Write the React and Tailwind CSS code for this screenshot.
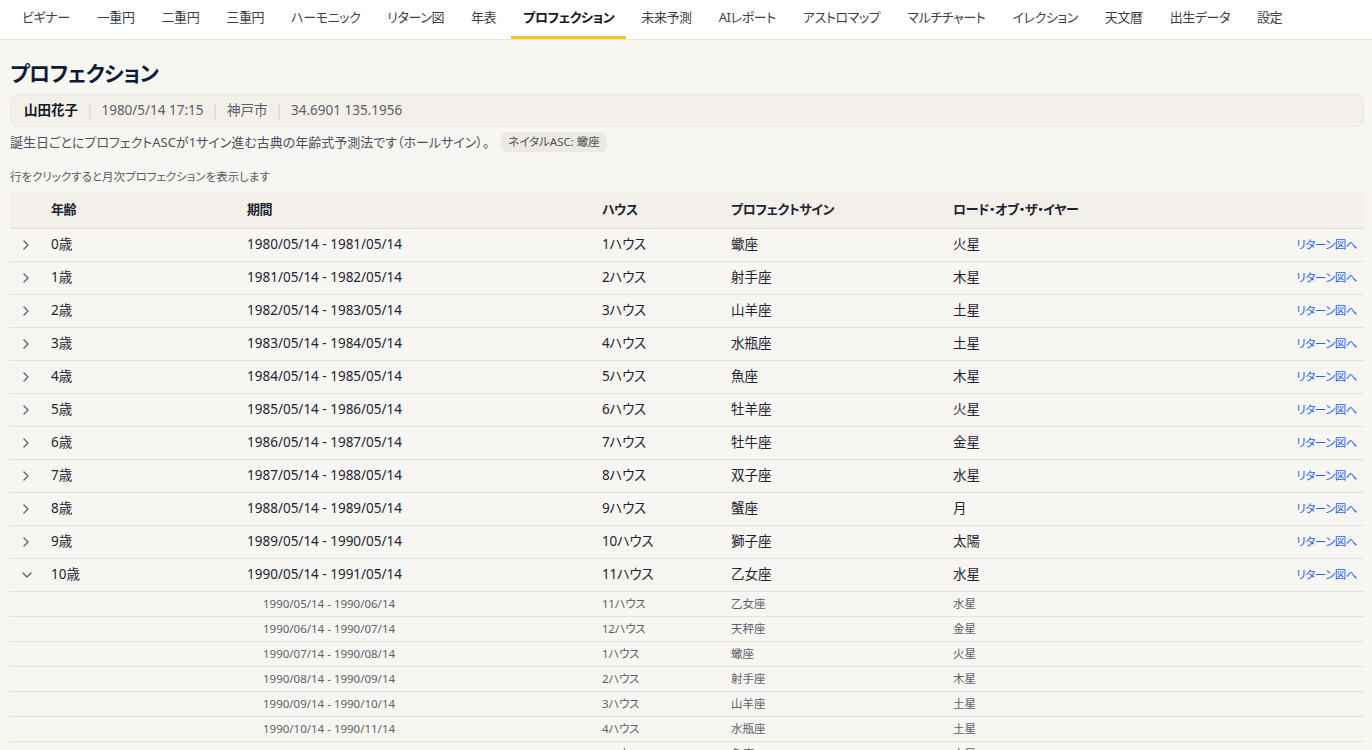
import React, { useState } from 'react';

const tabs = [
  'ビギナー', '一重円', '二重円', '三重円', 'ハーモニック', 'リターン図', '年表',
  'プロフェクション', '未来予測', 'AIレポート', 'アストロマップ', 'マルチチャート',
  'イレクション', '天文暦', '出生データ', '設定',
];

const signs = ['蠍座', '射手座', '山羊座', '水瓶座', '魚座', '牡羊座', '牡牛座', '双子座', '蟹座', '獅子座', '乙女座', '天秤座'];
const lords = ['火星', '木星', '土星', '土星', '木星', '火星', '金星', '水星', '月', '太陽', '水星', '金星'];

const pad = (n) => String(n).padStart(2, '0');

const years = Array.from({ length: 24 }, (_, i) => ({
  age: i,
  from: `${1980 + i}/05/14`,
  to: `${1981 + i}/05/14`,
  house: (i % 12) + 1,
  sign: signs[i % 12],
  lord: lords[i % 12],
}));

// 月次プロフェクション（選択した年齢のハウスから1ヶ月ずつ進む）
const monthly = (row) =>
  Array.from({ length: 12 }, (_, m) => {
    const y = 1980 + row.age;
    const m1 = ((4 + m) % 12) + 1;
    const y1 = y + Math.floor((4 + m) / 12);
    const m2 = ((5 + m) % 12) + 1;
    const y2 = y + Math.floor((5 + m) / 12);
    const idx = (row.age + m) % 12;
    return {
      from: `${y1}/${pad(m1)}/14`,
      to: `${y2}/${pad(m2)}/14`,
      house: idx + 1,
      sign: signs[idx],
      lord: lords[idx],
    };
  });

function ChevronRight() {
  return (
    <svg width="8" height="10" viewBox="0 0 8 10" className="text-[#5b6170]">
      <path d="M2 1 L6 5 L2 9" fill="none" stroke="currentColor" strokeWidth="1.3" strokeLinecap="round" strokeLinejoin="round" />
    </svg>
  );
}

function ChevronDown() {
  return (
    <svg width="10" height="8" viewBox="0 0 10 8" className="text-[#5b6170]">
      <path d="M1 2 L5 6 L9 2" fill="none" stroke="currentColor" strokeWidth="1.3" strokeLinecap="round" strokeLinejoin="round" />
    </svg>
  );
}

export default function App() {
  const [open, setOpen] = useState(10);

  return (
    <div className="min-h-screen bg-[#f8f6f2] text-[#1c2434] font-['Noto_Sans','Noto_Sans_CJK_JP',sans-serif] [font-feature-settings:'palt']">
      {/* Tabs */}
      <nav className="h-[40px] bg-white border-b border-[#e6e2dc] flex items-start pl-[10px] gap-[3px]">
        {tabs.map((t) => (
          <div
            key={t}
            className={`h-[39px] px-3 pt-[7px] text-[13px] leading-[20px] tracking-[-0.4px] whitespace-nowrap border-b-[3px] ${
              t === 'プロフェクション' ? 'border-[#f5c518] text-[#111827] font-semibold' : 'border-transparent text-[#3a3f4b]'
            }`}
          >
            {t}
          </div>
        ))}
      </nav>

      <main className="pl-[10px] pr-[8px] pt-[18px]">
        <h1 className="text-[21px] leading-[30px] font-bold tracking-[-0.5px] text-[#0f1a36]">プロフェクション</h1>

        <div className="mt-[6px] h-[33px] flex items-center gap-[8px] px-[13px] bg-[#f3f0eb] border border-[#ebe7e0] rounded-lg text-[13.5px]">
          <span className="font-bold text-[#111827]">山田花子</span>
          <span className="text-[#d4d0c9]">|</span>
          <span className="text-[#5a5f6b]">1980/5/14 17:15</span>
          <span className="text-[#d4d0c9]">|</span>
          <span className="text-[#5a5f6b]">神戸市</span>
          <span className="text-[#d4d0c9]">|</span>
          <span className="text-[#5a5f6b]">34.6901 135.1956</span>
        </div>

        <div className="mt-[5px] flex items-center gap-3 text-[13px] leading-[20px] text-[#4b505c]">
          <span>誕生日ごとにプロフェクトASCが1サイン進む古典の年齢式予測法です（ホールサイン）。</span>
          <span className="px-[7px] h-[20px] leading-[20px] rounded-md bg-[#ece8e2] text-[11.5px] text-[#4b505c]">ネイタルASC: 蠍座</span>
        </div>

        <p className="mt-[17px] text-[11.5px] leading-[16px] text-[#555a66]">行をクリックすると月次プロフェクションを表示します</p>

        <table className="mt-[7px] w-full table-fixed border-collapse text-[13.5px]">
          <colgroup>
            <col className="w-[29px]" />
            <col className="w-[196px]" />
            <col className="w-[355px]" />
            <col className="w-[129px]" />
            <col className="w-[222px]" />
            <col className="w-[259px]" />
            <col />
          </colgroup>
          <thead>
            <tr className="h-[36px] bg-[#f3f0eb] border-b border-[#e3dfd8] text-left text-[13px] tracking-[-0.4px]">
              <th />
              <th className="pl-3 font-bold">年齢</th>
              <th className="pl-3 font-bold">期間</th>
              <th className="pl-3 font-bold">ハウス</th>
              <th className="pl-3 font-bold">プロフェクトサイン</th>
              <th className="pl-3 font-bold">ロード・オブ・ザ・イヤー</th>
              <th />
            </tr>
          </thead>
          <tbody>
            {years.map((r) => (
              <React.Fragment key={r.age}>
                <tr
                  onClick={() => setOpen(open === r.age ? null : r.age)}
                  className="h-[33px] border-b border-[#e6e2dc] cursor-pointer hover:bg-[#f3f0eb]"
                >
                  <td className="pl-[12px]">
                    <span className="flex items-center">{open === r.age ? <ChevronDown /> : <ChevronRight />}</span>
                  </td>
                  <td className="pl-3">{r.age}歳</td>
                  <td className="pl-3">{r.from} - {r.to}</td>
                  <td className="pl-3 tracking-[-0.3px]">{r.house}ハウス</td>
                  <td className="pl-3">{r.sign}</td>
                  <td className="pl-3">{r.lord}</td>
                  <td className="pr-[7px] text-right">
                    <a className="text-[11.5px] tracking-[-0.5px] text-[#2563eb]">リターン図へ</a>
                  </td>
                </tr>
                {open === r.age &&
                  monthly(r).map((m) => (
                    <tr key={m.from} className="h-[25px] border-b border-[#e6e2dc] text-[11.5px] text-[#5a5f6b]">
                      <td />
                      <td />
                      <td className="pl-[28px]">{m.from} - {m.to}</td>
                      <td className="pl-3 tracking-[-0.3px]">{m.house}ハウス</td>
                      <td className="pl-3">{m.sign}</td>
                      <td className="pl-3">{m.lord}</td>
                      <td />
                    </tr>
                  ))}
              </React.Fragment>
            ))}
          </tbody>
        </table>
      </main>
    </div>
  );
}
